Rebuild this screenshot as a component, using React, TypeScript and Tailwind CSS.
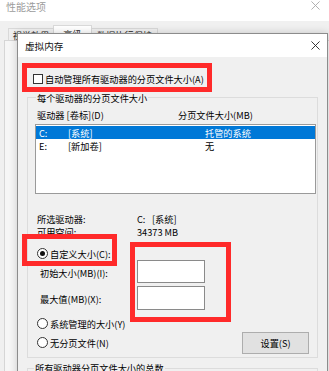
import React from "react";

function Radio({ checked }: { checked?: boolean }) {
  return (
    <span className="w-[11px] h-[11px] rounded-full border border-[#333] bg-white flex items-center justify-center shrink-0">
      {checked && <span className="w-[5px] h-[5px] rounded-full bg-[#111]" />}
    </span>
  );
}

function XIcon({ color, size }: { color: string; size: number }) {
  return (
    <svg width={size} height={size} viewBox="0 0 10 10">
      <path d="M0.5 0.5 L9.5 9.5 M9.5 0.5 L0.5 9.5" stroke={color} strokeWidth="1" fill="none" />
    </svg>
  );
}

export default function App() {
  return (
    <div className="relative w-[329px] h-[371px] overflow-hidden bg-[#f0f0f0] font-['Noto_Sans_CJK_SC','Noto_Sans',sans-serif] text-[9.2px] leading-[12px] text-black">
      {/* outer window title */}
      <div className="h-[21px] bg-white flex items-start justify-between">
        <span className="pl-[6px] pt-[1px] text-[10px] text-[#9c9c9c]">性能选项</span>
        <span className="pr-[9px] pt-[1px]">
          <XIcon color="#a8a8a8" size={9} />
        </span>
      </div>
      {/* outer tabs */}
      <div className="flex items-end h-[19px] pl-[8px]">
        <div className="h-[12px] w-[45px] border-l border-t border-[#d9d9d9] flex justify-center text-[#222]">视觉效果</div>
        <div className="h-[15px] w-[39px] border-l border-t border-r border-[#d9d9d9] bg-white flex justify-center pt-[2px] text-[#222]">高级</div>
        <div className="h-[12px] w-[66px] border-t border-r border-[#d9d9d9] flex justify-center text-[#222]">数据执行保护</div>
      </div>
      <div className="ml-[4px] h-[340px] border-l border-t border-[#d6d6d6] bg-[#f6f6f6]" />

      {/* dialog window */}
      <div className="absolute left-[17px] top-[33px] w-[311px] h-[350px] border border-[#8c8c8c] bg-[#f0f0f0] shadow-[0_0_8px_rgba(0,0,0,0.18)]">
        <div className="h-[23px] bg-white flex items-center justify-between pl-[7px] pr-[7px]">
          <span className="text-[9.6px] text-[#111]">虚拟内存</span>
          <XIcon color="#222" size={9} />
        </div>
        <div className="pt-[16px]">
          <div className="h-[12px] pl-[15px] flex items-center gap-[2px]">
            <span className="w-[10px] h-[10px] border border-[#333] bg-white shrink-0" />
            <span>自动管理所有驱动器的分页文件大小(A)</span>
          </div>

          {/* group box */}
          <div className="relative mx-[9px] mt-[12px] border border-[#dcdcdc] pb-[3px]">
            <span className="absolute -top-[6px] left-[8px] px-[1px] bg-[#f0f0f0]">每个驱动器的分页文件大小</span>
            <div className="mt-[11px] pl-[9px] h-[12px] flex">
              <span className="w-[141px]">驱动器 [卷标](D)</span>
              <span>分页文件大小(MB)</span>
            </div>
            <div className="mt-[3px] ml-[7px] mr-[1px] h-[70px] border border-[#9a9a9a] bg-white pt-[1px]">
              <div className="h-[13px] flex items-center bg-[#0078d7] text-white pl-[3px]">
                <span className="w-[29px]">C:</span>
                <span className="w-[137px]">[系统]</span>
                <span>托管的系统</span>
              </div>
              <div className="h-[13px] flex items-center pl-[3px]">
                <span className="w-[29px]">E:</span>
                <span className="w-[137px]">[新加卷]</span>
                <span>无</span>
              </div>
            </div>
            <div className="mt-[18px] pl-[9px] h-[13px] flex items-center">
              <span className="w-[100px]">所选驱动器:</span>
              <span className="w-[15px]">C:</span>
              <span>[系统]</span>
            </div>
            <div className="pl-[9px] h-[13px] flex items-center">
              <span className="w-[100px]">可用空间:</span>
              <span>34373 MB</span>
            </div>
            <div className="mt-[9px] pl-[9px] h-[13px] flex items-center gap-[2px]">
              <Radio checked />
              <span>自定义大小(C):</span>
            </div>
            <div className="pl-[12px] flex items-center">
              <span className="w-[97px] pt-[2px]">初始大小(MB)(I):</span>
              <span className="w-[68px] h-[23px] border border-[#8a8a8a] bg-white" />
            </div>
            <div className="mt-[3px] pl-[12px] flex items-center">
              <span className="w-[97px] pt-[2px]">最大值(MB)(X):</span>
              <span className="w-[68px] h-[24px] border border-[#8a8a8a] bg-white" />
            </div>
            <div className="mt-[7px] flex items-start justify-between">
              <div className="pl-[9px] flex flex-col">
                <div className="h-[13px] flex items-center gap-[2px]">
                  <Radio />
                  <span>系统管理的大小(Y)</span>
                </div>
                <div className="mt-[6px] h-[13px] flex items-center gap-[2px]">
                  <Radio />
                  <span>无分页文件(N)</span>
                </div>
              </div>
              <div className="mt-[15px] mr-[8px] w-[67px] h-[22px] border border-[#adadad] bg-[#e1e1e1] flex items-center justify-center">
                设置(S)
              </div>
            </div>
          </div>

          {/* second group box */}
          <div className="relative mx-[9px] mt-[10px] h-[30px] border border-[#dcdcdc]">
            <span className="absolute -top-[7px] left-[6px] px-[1px] bg-[#f0f0f0]">所有驱动器分页文件大小的总数</span>
          </div>
        </div>
      </div>

      {/* red annotation boxes */}
      <div className="absolute left-[22px] top-[63px] w-[190px] h-[29px] border-[5px] border-[#ff2a2a]" />
      <div className="absolute left-[22px] top-[234px] w-[95px] h-[32px] border-[5px] border-[#ff2a2a]" />
      <div className="absolute left-[130px] top-[242px] w-[101px] h-[80px] border-[5px] border-[#ff2a2a]" />
    </div>
  );
}
